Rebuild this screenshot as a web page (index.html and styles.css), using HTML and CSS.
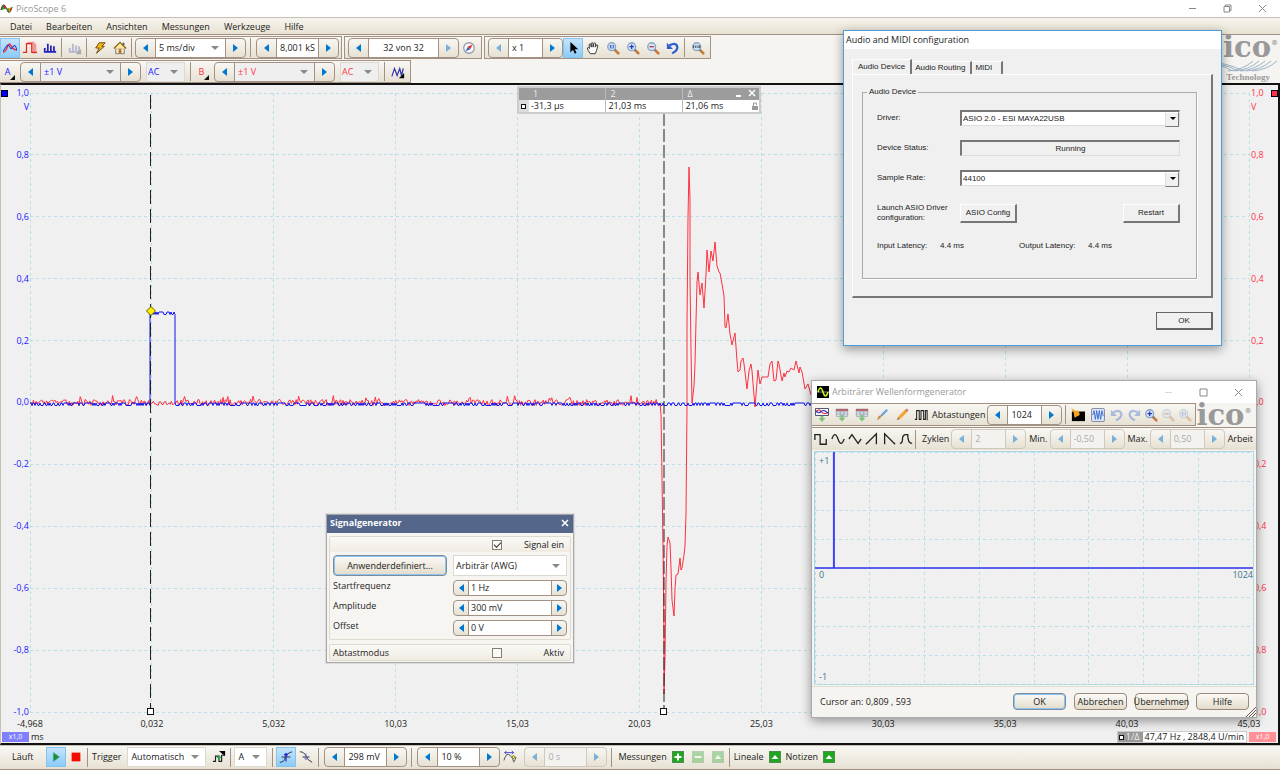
FILE: index.html
```html
<!DOCTYPE html>
<html lang="de">
<head>
    <meta charset="UTF-8">
    <meta name="viewport" content="width=device-width, initial-scale=1.0">
    <title>PicoScope 6</title>
    <link rel="stylesheet" href="styles.css">
</head>
<body>

    <!-- Shared icon shapes -->
    <svg class="defs" aria-hidden="true">
        <symbol id="lens" viewBox="0 0 16 16">
            <path d="M9 9l5 5" stroke="#c87a3c" stroke-width="3" stroke-linecap="round"/>
            <path d="M9 9l2 2" stroke="#777" stroke-width="2"/>
            <circle cx="6.5" cy="6.5" r="4.5" fill="#cfe2f6" stroke="#8da4c4" stroke-width="1.5"/>
        </symbol>
        <symbol id="plus" viewBox="0 0 16 16">
            <use href="#lens"/><path d="M4 6.5h5M6.5 4v5" stroke="#2233bb" stroke-width="1.4"/>
        </symbol>
        <symbol id="minus" viewBox="0 0 16 16">
            <use href="#lens"/><path d="M4 6.5h5" stroke="#c03030" stroke-width="1.4"/>
        </symbol>
        <symbol id="one" viewBox="0 0 16 16">
            <use href="#lens"/><path d="M5 4.5v4M8.300 4.500v4M6.500 5v1M6.500 7.500v1" stroke="#2244bb"/>
        </symbol>
        <symbol id="undo" viewBox="0 0 16 16">
            <path d="M4 5Q12 1 13 7Q13 11 7 14" fill="none" stroke="#2e5fd0" stroke-width="2.600"/>
            <path d="M1 2v7h7z" fill="#2e5fd0"/>
        </symbol>
        <symbol id="wave" viewBox="0 0 16 16">
            <path d="M1 10Q4-2 8 8" fill="#2f9a2f" stroke="#222"/>
            <path d="M4 4Q6 3 8 8H5z" fill="#d22"/>
            <path d="M8 8Q11 19 15 6" fill="#e6c01c" stroke="#222"/>
            <path d="M8 8Q9 12 11 13V8z" fill="#2f9a2f"/>
            <path d="M12 8h2.500Q13 13 12 12z" fill="#d22"/>
        </symbol>
        <symbol id="up" viewBox="0 0 12 12">
            <rect x=".5" y=".5" width="11" height="11" fill="#1fa51f" stroke="#4c8f4c"/>
            <path d="M2.500 8L6 4l3.500 4z" fill="#fff"/>
        </symbol>
        <symbol id="table" viewBox="0 0 16 16">
            <path d="M1.500 1.500h13v8h-13zM1.500 4.500h13M1.500 7h13M6 2v7M10 2v7" fill="#e8eef4" stroke="#98a4b4"/>
            <path d="M1 1h14v2.500H1z" fill="#b5666c"/>
            <path d="M6.500 8h3v3H12l-4 4.500L4 11h2.500z" fill="#7cc47c"/>
        </symbol>
    </svg>

    <header class="titlebar">
        <svg class="icon"><use href="#wave"/></svg>
        <span class="app-name">PicoScope 6</span>
        <button class="win-btn" aria-label="Minimieren"><svg viewBox="0 0 9 9"><path d="M1 4.500h7"/></svg></button>
        <button class="win-btn" aria-label="Verkleinern"><svg viewBox="0 0 9 9"><path d="M1 2.500h5.500V8H1zM2.500 2.500V1H8v5.500H6.500"/></svg></button>
        <button class="win-btn" aria-label="Schließen"><svg viewBox="0 0 9 9"><path d="M1 1l7 7M8 1L1 8"/></svg></button>
    </header>

    <nav class="menu">
        <a href="#">Datei</a>
        <a href="#">Bearbeiten</a>
        <a href="#">Ansichten</a>
        <a href="#">Messungen</a>
        <a href="#">Werkzeuge</a>
        <a href="#">Hilfe</a>
    </nav>

    <div class="toolbars">
        <div class="toolbar-row">
            <div class="group">
                <button class="tool active" aria-label="Oszilloskop"><svg viewBox="0 0 16 16"><path d="M0 13Q3 13 5 7t4-2q3 6 7 5" fill="none" stroke="#e33" stroke-width="1.600"/><path d="M0 12L4 6q2-3 4 1 1 4 4-1 2-3 4 5" fill="none" stroke="#33c" stroke-width="1.200"/></svg></button>
                <button class="tool" aria-label="Persistenz"><svg viewBox="0 0 16 16"><path d="M5 2h7v11h2V3" fill="none" stroke="#e99" stroke-width="2.500"/><path d="M0 13h4V3h6v10h6" fill="none" stroke="#e22" stroke-width="1.400"/></svg></button>
                <button class="tool" aria-label="Spektrum"><svg viewBox="0 0 16 16"><path d="M2 12V8M5.500 12V3M9 12V5M12.500 12V6M1 12.500h14" stroke="#22b" stroke-width="2"/></svg></button>
                <span class="sep"></span>
                <button class="tool" disabled aria-label="Ansicht"><svg viewBox="0 0 16 16"><path d="M2 12V8M5.500 12V3M9 12V5M12.500 12V6M1 12.500h12" stroke="#b5b5d0" stroke-width="2"/><path d="M15 9v6H9z" fill="#aaa"/></svg></button>
                <span class="sep"></span>
                <button class="tool" aria-label="Automatisch einrichten"><svg viewBox="0 0 16 16"><path d="M7 2h7l-4 4h3L4 14l3-6H3z" fill="#f2b51d" stroke="#5e4008"/></svg></button>
                <button class="tool" aria-label="Startseite"><svg viewBox="0 0 16 16"><path d="M3 8h10v6.500H3z" fill="#eee3c8" stroke="#777"/><path d="M1 8.500L8 1.500l7 7" fill="#ffe9a0" stroke="#8a6510" stroke-width="1.500"/><path d="M6.500 9h3v5.500h-3z" fill="#b07a28"/><path d="M12 2v3" stroke="#555" stroke-width="2"/></svg></button>
                <span class="sep"></span>
                <div class="spin w-lg"><button aria-label="Zurück"></button><label class="pick"><select aria-label="Zeitbasis"><option>5 ms/div</option></select></label><button aria-label="Weiter"></button></div>
                <span class="sep"></span>
                <div class="spin w-md"><button aria-label="Weniger"></button><input type="text" value="8,001 kS" aria-label="Abtastungen"><button aria-label="Mehr"></button></div>
            </div>
            <div class="group">
                <div class="spin w-lg mid"><button aria-label="Vorheriger Puffer"></button><input type="text" value="32 von 32" aria-label="Puffer"><button disabled aria-label="Nächster Puffer"></button></div>
                <button class="tool" aria-label="Puffernavigator"><svg viewBox="0 0 16 16"><circle cx="8" cy="8" r="6" fill="#fff" stroke="#99a" stroke-width="1.500"/><path d="M12 4L9.500 9.500 6.500 6.500z" fill="#e22"/><path d="M4 12l2.500-5.500 3 3z" fill="#36c"/></svg></button>
            </div>
            <div class="group">
                <div class="spin w-sm"><button disabled aria-label="Zoom verkleinern"></button><input type="text" value="x 1" aria-label="Zoomfaktor"><button aria-label="Zoom vergrößern"></button></div>
                <button class="tool active" aria-label="Auswahl"><svg viewBox="0 0 16 16"><path d="M5 1v12l3-3 2 4.500 2-1-2-4h4z"/></svg></button>
                <button class="tool" aria-label="Hand"><svg viewBox="0 0 16 16"><path d="M5 14.500Q2 11 1.500 8q1-1.500 2.500.5L3.500 4q1-1.500 2 0L6 7V2.500q1-1.500 2 0V7l1-4.500q1-1 2 .3L10.500 7l1.500-2.500q1.500-.5 1.500 1L12 11l-1.500 3.500z" fill="#fff" stroke="#222"/></svg></button>
                <button class="tool" aria-label="Fensterzoom"><svg><use href="#one"/></svg></button>
                <button class="tool" aria-label="Vergrößern"><svg><use href="#plus"/></svg></button>
                <button class="tool" aria-label="Verkleinern"><svg><use href="#minus"/></svg></button>
                <button class="tool" aria-label="Rückgängig"><svg><use href="#undo"/></svg></button>
                <span class="sep"></span>
                <button class="tool" aria-label="Gesamtansicht"><svg viewBox="0 0 16 16"><use href="#lens"/><path d="M3 5v3M5.500 5v3M8 5v3M10 5v3" stroke="#234"/></svg></button>
            </div>
        </div>
        <div class="toolbar-row">
            <div class="group">
                <button class="tool channel blue" aria-label="Kanal A">A</button>
                <div class="spin w-xl blue"><button aria-label="Zurück"></button><label class="pick grey"><select aria-label="Bereich A"><option>±1 V</option></select></label><button aria-label="Weiter"></button></div>
                <label class="pick grey boxed ac blue"><select aria-label="Kopplung A"><option>AC</option></select></label>
                <span class="sep"></span>
                <button class="tool channel red" aria-label="Kanal B">B</button>
                <div class="spin w-xl red"><button aria-label="Zurück"></button><label class="pick grey"><select aria-label="Bereich B"><option>±1 V</option></select></label><button aria-label="Weiter"></button></div>
                <label class="pick grey boxed ac red"><select aria-label="Kopplung B"><option>AC</option></select></label>
                <span class="sep"></span>
                <button class="tool" aria-label="Filter"><svg viewBox="0 0 16 16"><path d="M1 13L4 4l3 8 3-8 2 8 2-8" fill="none" stroke="#33a" stroke-width="1.400"/><path d="M15 9v6H9z"/></svg></button>
            </div>
        </div>
        <div class="logo">
            <span class="logo-name">pico<sup>®</sup></span>
            <svg viewBox="0 0 90 12" fill="none" stroke="#9fb3c6"><path d="M0 1q30 1 45 10M5 1q30 1 45 10M10 1q30 1 45 10M0 11Q20 10 30 1M40 11Q55 10 65 1M46 11Q61 10 71 1M52 11Q67 10 77 1M58 11Q73 10 83 1M64 11Q79 10 89 1"/></svg>
            <span class="logo-sub">Technology</span>
        </div>
    </div>

    <main class="scope">
        <i class="corner left"></i>
        <i class="corner right"></i>
        <div class="scope-row">
            <ul class="y-axis blue" data-unit="V">
                <li>1,0</li><li>0,8</li><li>0,6</li><li>0,4</li><li>0,2</li><li>0,0</li><li>-0,2</li><li>-0,4</li><li>-0,6</li><li>-0,8</li><li>-1,0</li>
            </ul>
            <div class="plot">
                <svg id="scope-plot" viewBox="0 0 1219 619" preserveAspectRatio="none">
                    <path class="grid" data-cols="10" data-rows="10"/>
                    <path class="trace-red" id="trace-b"/>
                    <path class="trace-blue" id="trace-a"/>
                    <path class="ruler-one" d="M120.500 2V619"/>
                    <path class="ruler-two" d="M634 20V619"/>
                    <path class="marker" d="M121 213.500l4.500 4.500-4.500 4.500-4.500-4.500z"/>
                </svg>
                <i class="handle one"></i>
                <i class="handle two"></i>
            </div>
            <ul class="y-axis right red" data-unit="V">
                <li>1,0</li><li>0,8</li><li>0,6</li><li>0,4</li><li>0,2</li><li>0,0</li><li>-0,2</li><li>-0,4</li><li>-0,6</li><li>-0,8</li><li>-1,0</li>
            </ul>
        </div>
        <ul class="x-axis">
            <li>-4,968</li><li>0,032</li><li>5,032</li><li>10,03</li><li>15,03</li><li>20,03</li><li>25,03</li><li>30,03</li><li>35,03</li><li>40,03</li><li>45,03</li>
        </ul>
        <div class="scope-foot">
            <span class="scale">x1,0</span>
            <span class="unit">ms</span>
            <span class="freq"><b><i></i>1/Δ</b><span>47,47 Hz , 2848,4 U/min</span></span>
            <span class="scale pink">x1,0</span>
        </div>

        <table class="legend">
            <tr><th></th><th>1</th><th>2</th><th>Δ<span class="legend-btns"><i></i><svg viewBox="0 0 8 8"><path d="M1 1l6 6M7 1L1 7"/></svg></span></th></tr>
            <tr><td class="key"><i></i></td><td>-31,3 µs</td><td>21,03 ms</td><td>21,06 ms<svg class="lock" viewBox="0 0 6 8"><path d="M0 4h6v4H0z" fill="#999"/><path d="M1.500 4V1h3v2" fill="none" stroke="#999"/></svg></td></tr>
        </table>
    </main>

    <footer class="status">
        <span class="status-text run">Läuft</span>
        <button class="tool active" aria-label="Start"><svg viewBox="0 0 16 16"><path d="M5 3l7 5-7 5z" fill="#1d8a2c" stroke="#4a9"/></svg></button>
        <button class="tool" aria-label="Stopp"><svg viewBox="0 0 16 16"><path d="M3 3h10v10H3z" fill="#f20d00"/></svg></button>
        <span class="sep"></span>
        <label class="status-text" for="trigger">Trigger</label>
        <span class="pick boxed trigger"><select id="trigger"><option>Automatisch</option></select></span>
        <button class="tool" aria-label="Erweiterter Trigger"><svg viewBox="0 0 16 16"><path d="M1 13h3V7h4v6h3V6h3" fill="none" stroke="#222" stroke-width="1.300"/><path d="M8 1h7v6z"/><path d="M8 12V7M6 9l2-2 2 2" fill="none" stroke="#2a4" stroke-width="1.500"/></svg></button>
        <span class="sep"></span>
        <label class="pick boxed source"><select aria-label="Triggerquelle"><option>A</option></select></label>
        <span class="sep"></span>
        <button class="tool active" aria-label="Steigend"><svg viewBox="0 0 16 16"><path d="M1 14q5 0 6-5t8-7M3 8h10" fill="none" stroke="#222"/><path d="M8 13V4M6 6l2-2 2 2" fill="none" stroke="#22d" stroke-width="1.300"/></svg></button>
        <button class="tool" aria-label="Fallend"><svg viewBox="0 0 16 16"><path d="M1 2q5 0 7 5t7 7M4 8h8" fill="none" stroke="#222"/><path d="M8 4v7M6 9l2 2 2-2" fill="none" stroke="#66c"/></svg></button>
        <span class="sep wide"></span>
        <div class="spin w-md"><button aria-label="Weniger"></button><input type="text" value="298 mV" aria-label="Schwelle"><button aria-label="Mehr"></button></div>
        <span class="sep"></span>
        <div class="spin w-md"><button aria-label="Weniger"></button><input type="text" value="10 %" aria-label="Vortrigger"><button aria-label="Mehr"></button></div>
        <button class="tool" aria-label="Verzögerung"><svg viewBox="0 0 16 16"><path d="M1 12Q4 2 8 6t4 7 3-5" fill="none" stroke="#444"/><path d="M2 3h10M4 1L2 3l2 2M10 1l2 2-2 2" fill="none" stroke="#33c"/><path d="M12 6l2 2-2 2-2-2z" fill="#ee2" stroke="#663"/></svg></button>
        <div class="spin w-md off"><button disabled aria-label="Weniger"></button><input type="text" value="0 s" disabled aria-label="Nachtrigger"><button disabled aria-label="Mehr"></button></div>
        <span class="sep"></span>
        <span class="status-text">Messungen</span>
        <button class="tool" aria-label="Messung hinzufügen"><svg class="small" viewBox="0 0 12 12"><rect x=".5" y=".5" width="11" height="11" fill="#1fa51f" stroke="#4c8f4c"/><path d="M6 2.500v7M2.500 6h7" stroke="#fff" stroke-width="2"/></svg></button>
        <button class="tool" disabled aria-label="Messung löschen"><svg class="small faded" viewBox="0 0 12 12"><rect x=".5" y=".5" width="11" height="11" fill="#1fa51f" stroke="#4c8f4c"/><path d="M2.500 6h7" stroke="#fff" stroke-width="2"/></svg></button>
        <button class="tool" disabled aria-label="Messung bearbeiten"><svg class="small faded"><use href="#up"/></svg></button>
        <span class="sep"></span>
        <span class="status-text">Lineale</span>
        <button class="tool" aria-label="Lineale öffnen"><svg class="small"><use href="#up"/></svg></button>
        <span class="status-text">Notizen</span>
        <button class="tool" aria-label="Notizen öffnen"><svg class="small"><use href="#up"/></svg></button>
    </footer>

    <!-- Signal generator -->
    <section class="window generator">
        <div class="gen-title"><b>Signalgenerator</b><button aria-label="Schließen"><svg viewBox="0 0 8 8"><path d="M1 1l6 6M7 1L1 7"/></svg></button></div>
        <div class="gen-box">
            <label class="gen-head">Signal ein<input type="checkbox" checked></label>
            <div class="gen-grid">
                <button class="btn primary">Anwenderdefiniert...</button>
                <label class="pick boxed"><select aria-label="Signalform"><option>Arbiträr (AWG)</option></select></label>
                <label for="freq">Startfrequenz</label>
                <div class="spin slim"><button aria-label="Weniger"></button><input type="text" id="freq" value="1 Hz"><button aria-label="Mehr"></button></div>
                <label for="amp">Amplitude</label>
                <div class="spin slim"><button aria-label="Weniger"></button><input type="text" id="amp" value="300 mV"><button aria-label="Mehr"></button></div>
                <label for="offset">Offset</label>
                <div class="spin slim"><button aria-label="Weniger"></button><input type="text" id="offset" value="0 V"><button aria-label="Mehr"></button></div>
            </div>
        </div>
        <div class="gen-box">
            <div class="gen-head"><span class="gen-mode">Abtastmodus</span><label for="sweep">Aktiv</label><input type="checkbox" id="sweep"></div>
        </div>
    </section>

    <!-- Arbitrary waveform generator -->
    <section class="window awg">
        <div class="awg-title">
            <svg class="icon" viewBox="0 0 12 12"><path d="M0 0h12v12H0z"/><path d="M0 6h12" stroke="#888"/><path d="M1 6Q3.500-2 6 6t5 0" fill="none" stroke="#cf2" stroke-width="1.500"/></svg>
            <span class="app-name">Arbiträrer Wellenformgenerator</span>
            <button class="win-btn dim" aria-label="Minimieren"><svg viewBox="0 0 9 9"><path d="M1 4.500h7"/></svg></button>
            <button class="win-btn" aria-label="Maximieren"><svg viewBox="0 0 9 9"><path d="M1 1h7v7H1z"/></svg></button>
            <button class="win-btn" aria-label="Schließen"><svg viewBox="0 0 9 9"><path d="M1 1l7 7M8 1L1 8"/></svg></button>
        </div>
        <div class="toolbar-row">
            <div class="group">
                <button class="tool" aria-label="Vom Kanal importieren"><svg viewBox="0 0 16 16"><path d="M.5.5h15v8H.5z" fill="#fff" stroke="#335"/><path d="M1 5q3-5 6-1t8 1" fill="none" stroke="#e22" stroke-width="1.300"/><path d="M1 3q3 4 6 1t8 2" fill="none" stroke="#33c" stroke-width="1.300"/><path d="M6.500 9h3v2.500H12L8 16l-4-4.500h2.500z" fill="#7cc47c"/></svg></button>
                <button class="tool" aria-label="Importieren"><svg><use href="#table"/></svg></button>
                <button class="tool" aria-label="Exportieren"><svg><use href="#table"/></svg></button>
                <button class="tool" aria-label="Löschen"><svg viewBox="0 0 16 16"><path d="M14 2L7 9" stroke="#6ba3de" stroke-width="2.500"/><path d="M8 8l-2 4-4 2 2-5z" fill="#c89650"/></svg></button>
                <button class="tool" aria-label="Zeichnen"><svg viewBox="0 0 16 16"><path d="M13 3L5 11" stroke="#f0a530" stroke-width="3.500"/><path d="M14.500 1.500l-2 2" stroke="#d77" stroke-width="3"/><path d="M3.500 10l2.500 2.500-4 1.500z" fill="#bd7c42"/></svg></button>
                <button class="tool tight" aria-label="Bitstrom"><svg viewBox="0 0 16 16"><path d="M1 13h2V3h3v10h2V3h3v10h2V3h2v11" fill="none" stroke="#222" stroke-width="1.200"/></svg></button>
                <label class="bar-text" for="samples">Abtastungen</label>
                <div class="spin w-sm"><button aria-label="Weniger"></button><input type="text" id="samples" value="1024"><button aria-label="Mehr"></button></div>
                <span class="sep"></span>
                <button class="tool" aria-label="Leeren"><svg viewBox="0 0 16 16"><path d="M1 4h15v11H1z"/><path d="M0 0l5 3 4 0 1 5-6 3-1-6z" fill="#f5a21c"/></svg></button>
                <button class="tool" aria-label="Normieren"><svg viewBox="0 0 16 16"><rect x=".5" y=".5" width="15" height="15" rx="2" fill="#dce8fa" stroke="#779"/><path d="M2 8l1.500-5 1.500 10L6.500 3 8 13 9.500 3 11 13l1.500-10L14 9" fill="none" stroke="#36c"/></svg></button>
                <button class="tool tight faded" disabled aria-label="Rückgängig"><svg><use href="#undo"/></svg></button>
                <button class="tool tight faded" disabled aria-label="Wiederholen"><svg viewBox="0 0 16 16"><use href="#undo" transform="matrix(-1 0 0 1 16 0)"/></svg></button>
                <button class="tool tight" aria-label="Vergrößern"><svg><use href="#plus"/></svg></button>
                <button class="tool tight faded" disabled aria-label="Verkleinern"><svg><use href="#minus"/></svg></button>
                <button class="tool tight faded" disabled aria-label="Gesamtansicht"><svg><use href="#one"/></svg></button>
            </div>
            <span class="logo-name">ico<sup>®</sup></span>
        </div>
        <div class="toolbar-row clip">
            <div class="group">
                <button class="tool tight" aria-label="Rechteck"><svg viewBox="0 0 16 16"><path class="shape" d="M1 9V3h6v11h7V8"/></svg></button>
                <button class="tool tight" aria-label="Sinus"><svg viewBox="0 0 16 16"><path class="shape" d="M1 8Q4.500-2 8 8t7 0"/></svg></button>
                <button class="tool tight" aria-label="Dreieck"><svg viewBox="0 0 16 16"><path class="shape" d="M1 8l3.500-5 7 10L15 8"/></svg></button>
                <button class="tool tight" aria-label="Rampe aufwärts"><svg viewBox="0 0 16 16"><path class="shape" d="M1 14L13 2v12"/></svg></button>
                <button class="tool tight" aria-label="Rampe abwärts"><svg viewBox="0 0 16 16"><path class="shape" d="M3 14V2l12 12"/></svg></button>
                <button class="tool tight" aria-label="Gauß"><svg viewBox="0 0 16 16"><path class="shape" d="M1 13q3 0 3-5 0-5 4-5h2q0 10 5 10"/></svg></button>
                <span class="sep"></span>
                <label class="bar-text" for="cycles">Zyklen</label>
                <div class="spin w-sm off"><button disabled aria-label="Weniger"></button><input type="text" id="cycles" value="2" disabled><button disabled aria-label="Mehr"></button></div>
                <label class="bar-text" for="min">Min.</label>
                <div class="spin w-sm off"><button disabled aria-label="Weniger"></button><input type="text" id="min" value="-0,50" disabled><button disabled aria-label="Mehr"></button></div>
                <label class="bar-text" for="max">Max.</label>
                <div class="spin w-sm off"><button disabled aria-label="Weniger"></button><input type="text" id="max" value="0,50" disabled><button disabled aria-label="Mehr"></button></div>
                <span class="bar-text">Arbeit</span>
            </div>
        </div>
        <div class="awg-plot">
            <svg viewBox="0 0 440 232" preserveAspectRatio="none">
                <path class="grid" data-cols="8" data-rows="8"/>
                <path class="awg-pulse" d="M19 0V116"/>
                <path class="awg-line" d="M0 116H440"/>
            </svg>
            <span class="awg-label top">+1</span>
            <span class="awg-label zero">0</span>
            <span class="awg-label end">1024</span>
            <span class="awg-label bottom">-1</span>
        </div>
        <div class="awg-foot">
            <span>Cursor an: 0,809 , 593</span>
            <button class="btn primary">OK</button>
            <button class="btn">Abbrechen</button>
            <button class="btn">Übernehmen</button>
            <button class="btn">Hilfe</button>
            <svg class="grip" viewBox="0 0 10 10"><path d="M0 10L10 0M3 10l7-7M6 10l4-4" stroke="#665f50"/></svg>
        </div>
    </section>

    <!-- Audio driver settings -->
    <section class="window audio">
        <div class="audio-title">Audio and MIDI configuration</div>
        <div class="audio-body">
            <div class="tabs">
                <button class="tab current">Audio Device</button>
                <button class="tab">Audio Routing</button>
                <button class="tab midi">MIDI</button>
            </div>
            <div class="tab-page">
                <fieldset>
                    <legend>Audio Device</legend>
                    <div class="row"><label for="driver">Driver:</label><span class="combo"><select id="driver"><option>ASIO 2.0 - ESI MAYA22USB</option></select></span></div>
                    <div class="row"><span>Device Status:</span><output class="sunken">Running</output></div>
                    <div class="row"><label for="rate">Sample Rate:</label><span class="combo"><select id="rate"><option>44100</option></select></span></div>
                    <div class="row tall"><span>Launch ASIO Driver<br>configuration:</span><button class="classic">ASIO Config</button><button class="classic last">Restart</button></div>
                    <div class="row latency"><span>Input Latency:</span><span>4.4 ms</span><span>Output Latency:</span><span>4.4 ms</span></div>
                </fieldset>
            </div>
            <button class="classic default">OK</button>
        </div>
    </section>

    <script src="scope.js"></script>
</body>
</html>
```

FILE: scope.js
```js
// Dashed grids, sized from each plot's viewBox
document.querySelectorAll("path.grid").forEach(function (path) {
    const box = path.ownerSVGElement.viewBox.baseVal;
    const cols = Number(path.dataset.cols);
    const rows = Number(path.dataset.rows);
    let d = "";
    for (let i = 0; i <= cols; i++) d += "M" + (box.width * i / cols) + " 0V" + box.height;
    for (let i = 0; i <= rows; i++) d += "M0 " + (box.height * i / rows) + "H" + box.width;
    path.setAttribute("d", d);
});

// Fixed seed so the noise looks the same on each load
let seed = 7;
function random() {
    seed = (seed * 16807) % 2147483647;
    return seed / 2147483647;
}

const ZERO = 310;

// Channel A: baseline, 1 ms pulse, baseline
function traceA() {
    let d = "M0 " + ZERO;
    for (let x = 1; x <= 1219; x++) {
        const high = x > 120 && x <= 145;
        if (x === 121) d += "V219";
        if (x === 146) d += "V" + ZERO;
        const base = high ? 219 : ZERO;
        d += "L" + x + " " + (base + (random() > 0.6 ? 2.5 : 0));
    }
    return d;
}

// Channel B: noise, then the delayed response
const response = [
    [630, 310], [631, 321], [632, 384], [633, 457], [634, 543], [634, 601], [635, 564],
    [636, 489], [637, 453], [638, 444], [640, 450], [641, 475], [642, 507], [644, 523],
    [645, 496], [646, 482], [648, 481], [650, 465], [651, 477], [652, 475], [654, 462],
    [655, 453], [656, 421], [657, 314], [657, 232], [658, 125], [659, 74], [660, 107],
    [660, 186], [661, 257], [662, 310], [664, 293], [665, 271], [666, 228], [667, 189],
    [668, 179], [670, 202], [672, 190], [674, 215], [676, 182], [677, 157], [679, 179],
    [681, 158], [683, 168], [685, 149], [687, 173], [689, 179], [690, 180], [692, 191],
    [694, 203], [695, 234], [696, 235], [698, 221], [700, 241], [702, 252], [705, 240],
    [707, 268], [708, 279], [710, 277], [711, 268], [713, 265], [714, 271], [717, 296],
    [719, 278], [721, 271], [722, 278], [725, 314], [727, 289], [728, 277], [730, 291],
    [732, 284], [738, 284], [740, 271], [742, 268], [744, 288], [746, 287], [748, 268],
    [749, 271], [752, 288], [754, 280], [755, 284], [757, 278], [759, 279], [761, 275],
    [764, 277], [766, 268], [769, 280], [770, 274], [772, 279], [775, 296], [778, 291],
    [781, 302]
];

function traceB() {
    let d = "M0 " + ZERO;
    for (let x = 1; x < 629; x += 1.2) {
        const spike = random() > 0.93 ? 4 : 0;
        d += "L" + x.toFixed(1) + " " + (ZERO + 2.5 - random() * 6 - spike).toFixed(1);
    }
    response.forEach(function (p) {
        d += "L" + p[0] + " " + p[1];
    });
    return d;
}

document.getElementById("trace-a").setAttribute("d", traceA());
document.getElementById("trace-b").setAttribute("d", traceB());
```

FILE: styles.css
```css
:root {
    --line: #a39183;
    --cream: #f6f4f0;
    --face: #f0f0f0;
    --blue: #1a1aff;
    --red: #ff3344;
    --arrow: #0078d0;
}

* {
    margin: 0;
    padding: 0;
    box-sizing: border-box;
}

body {
    height: 100vh;
    display: flex;
    flex-direction: column;
    position: relative;
    overflow: hidden;
    background: var(--cream);
    color: #222;
    font-family: "Open Sans", "Noto Sans", sans-serif;
    font-size: 9px;
    line-height: 12px;
}

button,
input,
select {
    font: inherit;
    color: inherit;
    border: none;
    background: none;
}

ul {
    list-style: none;
}

a {
    color: inherit;
    text-decoration: none;
}

.defs {
    position: absolute;
    width: 0;
    height: 0;
}

.blue {
    color: var(--blue);
}

.red {
    color: var(--red);
}

.faded {
    opacity: 0.35;
}

/* Title bar and menu */
.titlebar,
.awg-title {
    display: flex;
    align-items: center;
    background: white;
}

.titlebar {
    height: 17px;
}

.icon {
    width: 13px;
    height: 13px;
}

.app-name {
    flex: 1;
    margin-left: 3px;
    color: #999;
}

.win-btn {
    width: 35px;
    height: 16px;
    display: flex;
    align-items: center;
    justify-content: center;
}

.win-btn svg {
    width: 9px;
    height: 9px;
    fill: none;
    stroke: #888;
}

.win-btn.dim {
    opacity: 0.3;
}

.menu {
    height: 18px;
    display: flex;
    align-items: center;
    gap: 14px;
    padding: 1px 0 0 10px;
    background: linear-gradient(#f6f4ee, #e8e2d2);
    border-top: 1px solid #c9beb4;
    border-bottom: 1px solid var(--line);
}

/* Toolbars */
.toolbars {
    position: relative;
}

.toolbar-row {
    display: flex;
    gap: 2px;
    padding-top: 1px;
}

.group {
    height: 23px;
    display: flex;
    align-items: center;
    padding-right: 2px;
    background: linear-gradient(#f8f7f3, #e7e1d3);
    border: 1px solid var(--line);
    border-left-width: 0;
}

.group + .group {
    border-left-width: 1px;
    padding-left: 3px;
}

.tool {
    flex: none;
    width: 20px;
    height: 20px;
    display: flex;
    align-items: center;
    justify-content: center;
}

.tool svg {
    width: 14px;
    height: 14px;
}

.tool svg.small {
    width: 12px;
    height: 12px;
}

.tool.tight {
    width: 17px;
}

.tool.active {
    background: linear-gradient(#c4e4fc, #8ccbf9);
    border: 1px solid #86c2ee;
}

.shape {
    fill: none;
    stroke: #222;
    stroke-width: 1.5;
}

.channel::after {
    content: "";
    align-self: flex-end;
    margin-bottom: 2px;
    border-left: 5px solid transparent;
    border-bottom: 5px solid #111;
}

.sep {
    flex: none;
    width: 1px;
    height: 19px;
    margin: 0 3px 0 1px;
    background: var(--line);
}

.sep.wide {
    margin: 0 5px 0 2px;
}

.spin + .sep {
    margin: 0 5px 0 4px;
}

.pick + .sep {
    margin: 0 3px 0 5px;
}

.spin {
    flex: none;
    height: 20px;
    display: flex;
    border: 1px solid var(--line);
    border-radius: 4px;
    overflow: hidden;
    background: linear-gradient(#f8f7f3, #e7e1d3);
}

.spin button {
    flex: none;
    width: 19px;
    display: flex;
    align-items: center;
    justify-content: center;
}

.spin button::before {
    content: "";
    border: 4px solid transparent;
    border-right: 5px solid var(--arrow);
    border-left: none;
}

.spin button:last-child::before {
    border-left: 5px solid var(--arrow);
    border-right: none;
}

.spin button:disabled::before {
    opacity: 0.5;
}

.spin input {
    flex: 1;
    min-width: 0;
    padding: 0 3px;
    background: white;
    border: solid var(--line);
    border-width: 0 1px;
}

.spin.mid input {
    text-align: center;
}

.spin.off {
    border-color: #cfc8bf;
}

.spin.off input {
    color: #aaa;
    background: #f3f2ef;
    border-color: #cfc8bf;
}

.spin.slim {
    height: 16px;
}

.spin.slim button {
    width: 14px;
}

.w-sm { width: 75px; }
.w-md { width: 83px; }
.w-lg { width: 111px; }
.w-xl { width: 121px; }

.pick {
    position: relative;
    flex: 1;
    display: flex;
    background: white;
    border: solid var(--line);
    border-width: 0 1px;
}

.pick select {
    appearance: none;
    width: 100%;
    padding: 0 3px;
}

.pick::after {
    content: "";
    position: absolute;
    right: 6px;
    top: calc(50% - 2px);
    border: 4px solid transparent;
    border-top-color: #888;
    border-bottom: none;
    pointer-events: none;
}

.pick.grey {
    background: #efefef;
}

.pick.boxed {
    flex: none;
    height: 20px;
    border: 1px solid #ddd8d0;
}

.pick.ac {
    width: 39px;
    margin-left: 5px;
}

.pick.ac select {
    padding-left: 1px;
}

/* Brand mark right of the toolbars */
.logo {
    position: absolute;
    top: 0;
    right: 2px;
    display: flex;
    flex-direction: column;
    align-items: flex-end;
    color: #999;
}

.logo svg {
    width: 90px;
    height: 12px;
}

.logo-name {
    font-family: "DejaVu Serif", serif;
    font-size: 29px;
    font-weight: bold;
    line-height: 25px;
    color: #999;
}

.logo-name sup {
    font-size: 7px;
    line-height: 7px;
    vertical-align: 12px;
}

.logo-sub {
    margin-right: 8px;
    line-height: 10px;
    font-family: "Liberation Serif", serif;
    font-weight: bold;
}

/* Scope view */
.scope {
    position: relative;
    flex: 1;
    display: flex;
    flex-direction: column;
    padding-top: 2px;
    background: var(--face);
    border: 2px solid #111;
    border-left: 1px solid #c9beb4;
}

.scope-row {
    flex: 1;
    display: flex;
}

.y-axis {
    position: relative;
    width: 29px;
    padding-right: 1px;
    display: flex;
    flex-direction: column;
    justify-content: space-between;
    text-align: right;
}

.y-axis::after {
    content: attr(data-unit);
    position: absolute;
    top: 14px;
    right: 1px;
}

.y-axis.right {
    padding: 0 0 0 2px;
    text-align: left;
}

.y-axis.right::after {
    left: 2px;
}

.plot {
    position: relative;
    flex: 1;
    margin: 6px 0;
}

.plot svg,
.awg-plot svg {
    position: absolute;
    width: 100%;
    height: 100%;
    overflow: visible;
}

.plot path,
.awg-plot path {
    fill: none;
    vector-effect: non-scaling-stroke;
}

path.grid {
    stroke: #b9dfe8;
    stroke-dasharray: 3 3;
    shape-rendering: crispEdges;
}

path.trace-red {
    stroke: #ff3040;
}

path.trace-blue {
    stroke: #1010f0;
}

path.ruler-one {
    stroke: #222;
    stroke-dasharray: 14 5;
}

path.ruler-two {
    stroke: #222;
    stroke-dasharray: 13 3;
}

.plot path.marker {
    fill: #ffee00;
    stroke: #665f00;
}

.handle {
    position: absolute;
    bottom: -3px;
    width: 7px;
    height: 7px;
    margin-left: -4px;
    background: white;
    border: 1px solid #111;
}

.handle.one { left: 9.9%; }
.handle.two { left: 52%; }

.corner {
    position: absolute;
    top: 5px;
    width: 7px;
    height: 7px;
    background: #0000ff;
    border: 1px solid #002;
}

.corner.left { left: 0; }

.corner.right {
    right: 0;
    background: var(--red);
}

.x-axis {
    height: 13px;
    display: flex;
    justify-content: space-between;
    margin: 0 9px;
}

.x-axis li {
    width: 40px;
    text-align: center;
}

.scope-foot {
    height: 12px;
    display: flex;
    align-items: center;
    gap: 2px;
    padding: 0 2px 0 1px;
}

.scale {
    width: 27px;
    height: 10px;
    line-height: 10px;
    font-size: 7px;
    text-align: center;
    color: white;
    background: #8080ff;
}

.scale.pink {
    background: #ff9096;
}

.unit {
    flex: 1;
}

.freq {
    display: flex;
    background: white;
    border: 1px solid #ccc;
    line-height: 10px;
}

.freq > span {
    padding: 0 2px;
}

.freq b {
    display: flex;
    align-items: center;
    gap: 2px;
    padding: 0 3px 0 1px;
    background: #999;
    color: #eee;
    font-weight: normal;
}

.freq i,
.legend .key i {
    width: 5px;
    height: 5px;
    background: white;
    border: 1px solid #111;
}

.legend {
    position: absolute;
    top: 1px;
    left: 40.4%;
    width: 244px;
    table-layout: fixed;
    border-collapse: collapse;
    background: white;
    border: 2px solid #ccc;
}

.legend th,
.legend td {
    height: 13px;
    padding-left: 2px;
    line-height: 12px;
    text-align: left;
    font-weight: normal;
    border-right: 1px solid #bbb;
    position: relative;
}

.legend th {
    background: #9c9c9c;
    color: #eee;
    padding-left: 4px;
}

.legend th:first-child {
    width: 11px;
    border-right: none;
}

.legend th:nth-child(4) {
    width: 77px;
}

.legend .key {
    background: #ddd;
    border: none;
}

.legend .key i {
    display: block;
}

.legend-btns {
    position: absolute;
    top: 1px;
    right: 3px;
    display: flex;
    align-items: flex-end;
    gap: 7px;
}

.legend-btns i {
    width: 5px;
    height: 2px;
    background: white;
}

.legend-btns svg {
    width: 8px;
    height: 8px;
    stroke: white;
    stroke-width: 1.5;
}

.lock {
    position: absolute;
    right: 1px;
    top: 2px;
    width: 6px;
    height: 8px;
}

/* Status bar */
.status {
    height: 25px;
    display: flex;
    align-items: center;
    padding-bottom: 1px;
    background: linear-gradient(#f8f7f3, #e7e1d3);
    border-top: 1px solid #c9beb4;
    border-bottom: 1px solid var(--line);
}

.status-text {
    padding: 0 1px;
}

.run {
    width: 46px;
    padding-left: 12px;
}

.trigger {
    width: 79px;
    margin: 0 3px 0 5px;
}

.source {
    width: 33px;
}

.status .tool + .spin {
    margin-left: 4px;
}

/* Floating windows */
.window {
    position: absolute;
    box-shadow: 0 3px 10px rgba(0, 0, 0, 0.4);
}

.btn {
    height: 17px;
    border: 1px solid #9a8878;
    border-radius: 4px;
    background: linear-gradient(#fbfaf7, #e3dccb);
    white-space: nowrap;
}

.btn.primary {
    border-color: #7d8a98;
    box-shadow: inset 0 0 0 1px #8cc4f4;
}

.generator {
    left: 326px;
    top: 514px;
    width: 248px;
    display: flex;
    flex-direction: column;
    padding-bottom: 1px;
    background: #f7f5f2;
    border: 1px solid #a8a8a8;
    box-shadow: 0 0 0 1px #ddd;
}

.gen-title {
    height: 18px;
    display: flex;
    justify-content: space-between;
    align-items: center;
    padding: 0 3px 2px;
    margin-bottom: 3px;
    background: #54678b;
    color: white;
}

.gen-title svg {
    display: block;
    width: 8px;
    height: 8px;
    margin-right: 1px;
    stroke: white;
    stroke-width: 1.5;
}

.gen-box {
    margin: 0 2px 4px;
    border: 1px solid #e0d9ce;
    border-radius: 2px;
}

.gen-box:last-child {
    margin-bottom: 0;
}

.gen-head {
    height: 15px;
    display: flex;
    flex-direction: row;
    align-items: center;
    justify-content: flex-end;
    position: relative;
    padding: 0 6px 0 3px;
    background: linear-gradient(#faf9f6, #f0ece3);
}

.gen-mode {
    flex: 1;
}

input[type="checkbox"] {
    appearance: none;
    position: absolute;
    right: 68px;
    width: 10px;
    height: 10px;
    border: 1px solid #8a7d70;
    background: #fbfaf8;
}

input[type="checkbox"]:checked::after {
    content: "";
    display: block;
    width: 6px;
    height: 3px;
    margin: 1px;
    border: solid #333;
    border-width: 0 0 1px 1px;
    transform: rotate(-45deg);
}

.gen-grid {
    display: grid;
    grid-template-columns: 1fr 1fr;
    gap: 4px 6px;
    padding: 3px 3px;
}

.gen-grid .btn,
.gen-grid .pick {
    height: 21px;
}

.gen-grid .spin input,
.gen-grid .pick select {
    padding: 0 2px;
}

/* Waveform generator window */
.awg {
    left: 811px;
    top: 380px;
    width: 446px;
    background: var(--cream);
    border: 1px solid #aaa;
    overflow: hidden;
}

.awg-title {
    height: 22px;
    padding-left: 5px;
}

.awg-title .icon {
    width: 12px;
    height: 12px;
}

.awg .toolbar-row {
    gap: 0;
    padding-top: 0;
    margin-bottom: 1px;
}

.awg .logo-name {
    height: 23px;
    line-height: 24px;
}

.clip .group {
    width: 100%;
    border-width: 1px 0 0;
    overflow: hidden;
}

.bar-text {
    flex: none;
    padding: 0 2px 0 3px;
}

.awg .spin + .sep {
    margin: 0 2px 0 3px;
}

.awg-plot {
    position: relative;
    height: 234px;
    margin: 0 2px;
    background: var(--face);
    border: 1px solid #a9d6e4;
}

path.awg-pulse {
    stroke: #4040ff;
    stroke-width: 2;
}

path.awg-line {
    stroke: #3030ee;
    stroke-width: 1.5;
}

.awg-label {
    position: absolute;
    left: 4px;
    color: #3c7488;
}

.awg-label.top { top: 3px; }
.awg-label.zero { top: 117px; }
.awg-label.bottom { bottom: 1px; }

.awg-label.end {
    top: 117px;
    left: auto;
    right: 0;
}

.awg-foot {
    position: relative;
    display: flex;
    align-items: center;
    gap: 8px;
    margin-top: 1px;
    padding: 6px 7px 7px 8px;
    border-top: 1px solid #e2ddd2;
}

.awg-foot span {
    flex: 1;
}

.awg-foot .btn {
    width: 53px;
    display: flex;
    align-items: center;
    justify-content: center;
}

.grip {
    position: absolute;
    right: 0;
    bottom: 0;
    width: 10px;
    height: 10px;
}

/* Audio settings window */
.audio {
    left: 843px;
    top: 30px;
    width: 379px;
    background: var(--face);
    border: 1px solid #4f9ed9;
}

.audio-title {
    height: 18px;
    padding: 3px 2px;
    background: white;
}

.audio-body {
    display: flex;
    flex-direction: column;
    padding: 10px 8px 15px;
    font-family: "Liberation Sans", Arial, sans-serif;
    font-size: 8px;
    line-height: 10px;
}

.tabs {
    display: flex;
    align-items: flex-end;
}

.tab {
    height: 13px;
    padding: 0 5px 0 3px;
    border-top: 1px solid white;
    border-right: 2px solid #777;
}

.tab.midi {
    padding-right: 9px;
}

.tab.current {
    height: 15px;
    padding: 0 5px;
    border-left: 1px solid white;
}

.tab-page {
    padding: 11px 14px 17px 9px;
    border: solid #777;
    border-width: 1px 2px 2px 1px;
    border-top-color: white;
    border-left-color: white;
}

fieldset {
    display: flex;
    flex-direction: column;
    gap: 14px;
    padding: 12px 16px 26px 14px;
    border: 1px solid #aaa;
    box-shadow: 1px 1px 0 white;
}

legend {
    height: 12px;
    margin-left: -10px;
    padding: 1px 2px;
}

.row {
    height: 16px;
    display: flex;
    align-items: center;
}

.row > :first-child {
    width: 83px;
}

.row.tall {
    height: 26px;
}

.row.latency {
    height: 12px;
}

.row.latency > :nth-child(1) { width: 63px; }
.row.latency > :nth-child(2) { width: 79px; }
.row.latency > :nth-child(3) { width: 69px; }

.combo,
.sunken {
    flex: 1;
    height: 16px;
    border: solid #777;
    border-width: 2px 1px 1px 2px;
    border-right-color: #ddd;
    border-bottom-color: #ddd;
}

.combo {
    position: relative;
    display: flex;
    background: white;
}

.combo select {
    appearance: none;
    width: 100%;
    padding-left: 1px;
}

.combo::after {
    content: "";
    position: absolute;
    top: 5px;
    right: 3px;
    border: 3px solid transparent;
    border-top-color: black;
    border-bottom: none;
    pointer-events: none;
}

.combo::before {
    content: "";
    position: absolute;
    top: 0;
    right: 0;
    width: 12px;
    height: 13px;
    background: var(--face);
    border: 1px solid #777;
    border-top-color: white;
    border-left-color: #ddd;
    pointer-events: none;
}

.sunken {
    line-height: 13px;
    text-align: center;
}

.classic {
    width: 57px;
    height: 19px;
    background: var(--face);
    border: solid #777;
    border-width: 1px 2px 2px 1px;
    border-top-color: white;
    border-left-color: white;
}

.classic.last {
    margin-left: auto;
}

.classic.default {
    align-self: flex-end;
    margin-top: 14px;
    border-color: #666;
    height: 18px;
}
```
